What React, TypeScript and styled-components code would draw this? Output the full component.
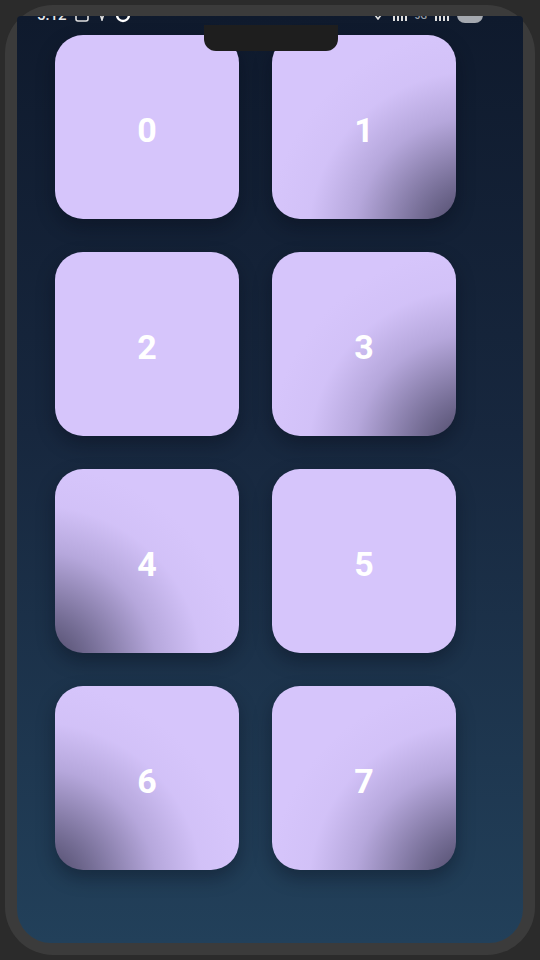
import styled, { createGlobalStyle, css } from 'styled-components';

const GlobalStyle = createGlobalStyle`
  html, body {
    margin: 0;
    padding: 0;
    background: #2b2b2b;
    font-family: Roboto, "Liberation Sans", sans-serif;
  }
`;

const Page = styled.div`
  width: 540px;
  height: 960px;
  padding: 5px;
  box-sizing: border-box;
  background: #2b2b2b;
`;

const Phone = styled.div`
  height: 950px;
  width: 530px;
  box-sizing: border-box;
  padding: 11px 12px 12px;
  border-radius: 48px;
  background: #3b3b3b;
`;

const Screen = styled.div`
  position: relative;
  height: 100%;
  overflow: hidden;
  border-radius: 4px 4px 34px 34px;
  background: linear-gradient(180deg, #0f1a2d 0%, #17273e 45%, #22405a 100%);
`;

const StatusBar = styled.div`
  position: absolute;
  top: -11px;
  left: 0;
  right: 0;
  height: 20px;
  padding: 0 38px 0 20px;
  display: flex;
  align-items: center;
  justify-content: space-between;
  color: #e8e8e8;
  font-size: 15px;
  font-weight: 500;
  z-index: 2;
`;

const StatusGroup = styled.div`
  display: flex;
  align-items: center;
  gap: 8px;
`;

const NetLabel = styled.span`
  font-size: 10px;
  color: #9aa0a8;
`;

const Notch = styled.div`
  position: absolute;
  top: 9px;
  left: 187px;
  width: 134px;
  height: 26px;
  border-radius: 0 0 12px 12px;
  background: #1e1e1e;
  z-index: 3;
`;

const Grid = styled.div`
  display: grid;
  grid-template-columns: repeat(2, 184px);
  column-gap: 33px;
  row-gap: 33px;
  padding: 19px 0 0 38px;
`;

type Shade = 'none' | 'br' | 'bl';

const shadeAt = (pos: string) => css`
  background-image: radial-gradient(
    circle at ${pos},
    rgba(52, 50, 76, 0.95) 0%,
    rgba(78, 74, 108, 0.72) 20%,
    rgba(124, 114, 164, 0.36) 42%,
    rgba(180, 166, 222, 0.12) 58%,
    rgba(214, 197, 251, 0) 72%
  );
`;

const shades = {
  none: css``,
  br: shadeAt('110% 110%'),
  bl: shadeAt('-10% 110%'),
};

const Tile = styled.div<{ $shade: Shade }>`
  width: 184px;
  height: 184px;
  box-sizing: border-box;
  padding-top: 5px;
  border-radius: 28px;
  background-color: #d6c5fb;
  ${(p) => shades[p.$shade]}
  box-shadow: 0 8px 18px rgba(5, 10, 20, 0.35);
  display: flex;
  align-items: center;
  justify-content: center;
  color: #ffffff;
  font-size: 34px;
  font-weight: 700;
`;

const tiles: Shade[] = ['none', 'br', 'none', 'br', 'bl', 'none', 'bl', 'br'];

function Bars() {
  return (
    <svg width="14" height="12" viewBox="0 0 14 12" fill="#e0e0e0">
      <rect x="0" y="6" width="2" height="6" />
      <rect x="4" y="4" width="2" height="8" />
      <rect x="8" y="2" width="2" height="10" />
      <rect x="12" y="0" width="2" height="12" />
    </svg>
  );
}

export default function App() {
  return (
    <>
      <GlobalStyle />
      <Page>
        <Phone>
          <Screen>
            <StatusBar>
              <StatusGroup>
                <span>5:12</span>
                <svg width="14" height="14" viewBox="0 0 14 14" fill="none" stroke="#e0e0e0" strokeWidth="1.6">
                  <rect x="1" y="1" width="12" height="12" rx="2" />
                </svg>
                <svg width="10" height="12" viewBox="0 0 10 12" fill="none" stroke="#e0e0e0" strokeWidth="1.6">
                  <path d="M2 1l3 10 3-10" />
                </svg>
                <svg width="16" height="16" viewBox="0 0 16 16" fill="none" stroke="#ffffff" strokeWidth="2.4">
                  <circle cx="8" cy="8" r="6" />
                </svg>
              </StatusGroup>
              <StatusGroup>
                <svg width="14" height="10" viewBox="0 0 14 10" fill="none" stroke="#e0e0e0" strokeWidth="1.6">
                  <path d="M1 1l6 8 6-8" />
                </svg>
                <Bars />
                <NetLabel>5G</NetLabel>
                <Bars />
                <svg width="28" height="16" viewBox="0 0 28 16">
                  <rect x="0" y="0" width="26" height="16" rx="8" fill="#a5a9b0" />
                </svg>
              </StatusGroup>
            </StatusBar>
            <Notch />
            <Grid>
              {tiles.map((shade, i) => (
                <Tile key={i} $shade={shade}>
                  {i}
                </Tile>
              ))}
            </Grid>
          </Screen>
        </Phone>
      </Page>
    </>
  );
}
